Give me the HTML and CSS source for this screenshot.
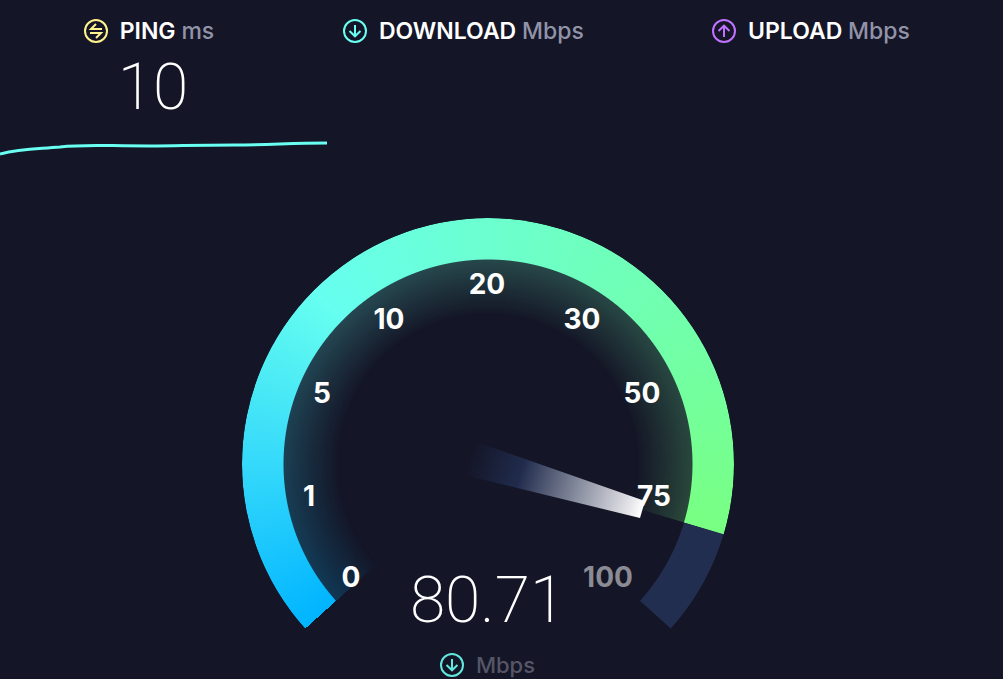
FILE: index.html
```html
<!DOCTYPE html>
<html lang="en">
<head>
  <meta charset="UTF-8">
  <meta name="viewport" content="width=device-width, initial-scale=1">
  <title>Speed test</title>
  <link rel="stylesheet" href="styles.css">
</head>
<body>
  <div class="stats">
    <div class="stat">
      <div class="stat-label">
        <svg class="icon ping" viewBox="0 0 24 24">
          <circle cx="12" cy="12" r="11"/>
          <path d="M12 5L7 10H18M6 14H17L12 19"/>
        </svg>
        <span>PING <span class="unit">ms</span></span>
      </div>
      <div class="number ping-number">10</div>
    </div>
    <div class="stat">
      <div class="stat-label">
        <svg class="icon download" viewBox="0 0 24 24">
          <circle cx="12" cy="12" r="11"/>
          <path d="M12 6V17M6.500 12L12 17.300L17.500 12"/>
        </svg>
        <span>DOWNLOAD <span class="unit">Mbps</span></span>
      </div>
    </div>
    <div class="stat">
      <div class="stat-label">
        <svg class="icon upload" viewBox="0 0 24 24">
          <circle cx="12" cy="12" r="11"/>
          <path d="M12 18V7M6.500 12L12 6.700L17.500 12"/>
        </svg>
        <span>UPLOAD <span class="unit">Mbps</span></span>
      </div>
    </div>
  </div>

  <svg class="graph" viewBox="0 0 327 20">
    <path d="M0 14C22 8 38 9 60 7C85 4 105 6 150 6C180 6 190 5 235 5C270 5 290 3 327 3"/>
  </svg>

  <div class="gauge">
    <div class="track"></div>
    <div class="glow"></div>
    <div class="progress"></div>
    <svg class="dial" viewBox="0 0 492 461">
      <defs>
        <linearGradient id="needle" gradientUnits="userSpaceOnUse" x1="226" y1="240" x2="400" y2="293">
          <stop offset="0" stop-color="#202b4c" stop-opacity="0"/>
          <stop offset="0.300" stop-color="#202b4c"/>
          <stop offset="0.930" stop-color="#e6e6ea"/>
          <stop offset="1" stop-color="#fff"/>
        </linearGradient>
      </defs>
      <polygon fill="url(#needle)" points="232,223 403,283 398,300 222,257"/>
      <g class="scale">
        <text x="109" y="369">0</text>
        <text x="67" y="288">1</text>
        <text x="80" y="185">5</text>
        <text x="147" y="111">10</text>
        <text x="245" y="76">20</text>
        <text x="340" y="111">30</text>
        <text x="400" y="185">50</text>
        <text x="412" y="288">75</text>
        <text class="off" x="366" y="369">100</text>
      </g>
    </svg>
    <div class="readout">
      <div class="number">80.71</div>
      <div class="readout-unit">
        <svg class="icon download" viewBox="0 0 24 24">
          <circle cx="12" cy="12" r="11"/>
          <path d="M12 6V17M6.500 12L12 17.300L17.500 12"/>
        </svg>
        <span>Mbps</span>
      </div>
    </div>
  </div>
</body>
</html>
```
FILE: styles.css
```css
body {
  margin: 0;
  background: #141526;
  color: #fff;
  font-family: Inter, "Liberation Sans", sans-serif;
}

.stats {
  display: grid;
  grid-template-columns: 27fr 30fr 33fr;
  padding: 16px 10px 0 0;
}

.stat {
  text-align: center;
}

.stat-label {
  display: flex;
  justify-content: center;
  align-items: center;
  gap: 12px;
  font-size: 23px;
  font-weight: 600;
  line-height: 30px;
}

.unit {
  color: #9193a8;
  font-weight: 500;
}

.icon {
  width: 24px;
  height: 24px;
  fill: none;
  stroke: currentColor;
  stroke-width: 2;
}

.ping {
  color: #fff38e;
}

.download {
  color: #6afff3;
}

.upload {
  color: #bf71ff;
}

.number {
  font-family: Roboto, "Liberation Sans", sans-serif;
  font-size: 64px;
  font-weight: 200;
  line-height: 84px;
}

.ping-number {
  padding-left: 8px;
}

.graph {
  display: block;
  width: 327px;
  height: 20px;
  margin-top: 10px;
  fill: none;
  stroke: #6afff3;
  stroke-width: 3;
}

.gauge {
  position: relative;
  display: flex;
  flex-direction: column;
  justify-content: flex-end;
  width: 492px;
  height: 461px;
  margin: 58px auto 0;
  left: -14px;
}

.track,
.progress,
.glow {
  position: absolute;
  top: 0;
  left: 0;
  width: 492px;
  height: 492px;
  border-radius: 50%;
}

.track,
.progress {
  mask: radial-gradient(circle closest-side, transparent 204px, #000 205px);
}

.track {
  background: conic-gradient(from 106deg, #222e4f 25.900deg, transparent 26.100deg);
}

.progress,
.glow {
  background: conic-gradient(from 228deg, #00b4ff, #35d9fa 42deg, #66fff0 87deg, #6cffcf 132deg, #71ffac 185deg, #78ff82 238.500deg, transparent 238.700deg);
}

.glow {
  mask: radial-gradient(circle closest-side, transparent 148px, rgba(0, 0, 0, 0.08) 168px, rgba(0, 0, 0, 0.22) 205px, transparent 205px);
}

.dial {
  position: absolute;
  top: 0;
  left: 0;
  width: 492px;
  height: 461px;
}

.scale {
  fill: #fff;
  font-size: 28px;
  font-weight: 700;
  text-anchor: middle;
}

.off {
  fill: #8b8b94;
}

.readout {
  position: relative;
  text-align: center;
}

.readout-unit {
  display: flex;
  justify-content: center;
  align-items: center;
  gap: 12px;
  padding-top: 8px;
  color: #555566;
  font-size: 22px;
  font-weight: 500;
  line-height: 28px;
}

.readout-unit .icon {
  opacity: 0.9;
}
```
